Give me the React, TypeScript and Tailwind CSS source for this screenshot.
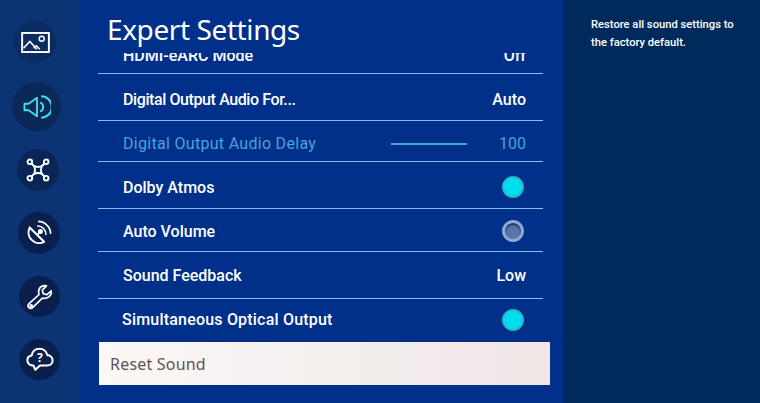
const font = { fontFamily: 'Roboto, "Noto Sans", sans-serif' };
const notoFont = { fontFamily: '"Noto Sans", sans-serif' };

function PictureIcon() {
  return (
    <svg viewBox="0 0 30 22" className="w-[29px] h-[21px]" fill="none" stroke="white" strokeWidth="1.500">
      <rect x="1" y="1" width="28" height="20" strokeWidth="2" />
      <circle cx="21.500" cy="7" r="2.600" />
      <path d="M2.500 17l6.500-7 7.500 8" strokeWidth="1.700" />
      <path d="M13 17l3-2.500 3.500 3.500" />
    </svg>
  );
}

function SoundIcon() {
  return (
    <svg viewBox="0 0 30 28" className="w-[28px] h-[26px]" fill="none" stroke="#45dcec" strokeWidth="2">
      <path d="M1.500 10.500h4.500L15 4v20l-9-6.500H1.500z" strokeLinejoin="round" />
      <path d="M18.500 9a5.500 5.500 0 0 1 0 10" />
      <path d="M19.500 2.500a11.500 11.500 0 0 1 0 23" strokeWidth="2.200" />
    </svg>
  );
}

function NetworkIcon() {
  return (
    <svg viewBox="0 0 28 28" className="w-[24px] h-[24px]" fill="none" stroke="white" strokeWidth="2.200">
      <path d="M6.500 6.500c2 3 5 4 7.500 4s5.500-1 7.500-4c-3 2-4 5-4 7.500s1 5.500 4 7.500c-2-3-5-4-7.500-4s-5.500 1-7.500 4c3-2 4-5 4-7.500s-1-5.500-4-7.500z" strokeLinejoin="round" />
      <circle cx="4.500" cy="4.500" r="2.700" />
      <circle cx="23.500" cy="4.500" r="2.700" />
      <circle cx="4.500" cy="23.500" r="2.700" />
      <circle cx="23.500" cy="23.500" r="2.700" />
    </svg>
  );
}

function SatelliteIcon() {
  return (
    <svg viewBox="0 0 28 28" className="w-[26px] h-[26px]" fill="none" stroke="white" strokeWidth="1.800">
      <path d="M4 8a11.500 11.500 0 0 0 15.500 15.500z" strokeLinejoin="round" strokeWidth="2.200" />
      <path d="M12 16l3-3" />
      <circle cx="15.500" cy="12.500" r="1.800" fill="white" />
      <path d="M12 6.500a9 9 0 0 1 9.500 9.500" />
      <path d="M13 1.500a13.500 13.500 0 0 1 13.500 13.500" />
    </svg>
  );
}

function WrenchIcon() {
  return (
    <svg viewBox="0 0 28 28" className="w-[26px] h-[26px]" fill="none" stroke="white" strokeWidth="1.800" strokeLinejoin="round">
      <path d="M26 7.500l-4.500 4-4-1-1-4 4.500-4.500c-4-1-8.500 1.500-8.500 6.500 0 1 .2 2 .5 2.800L2 21.500c-1.500 1.500-.8 3.200 0 4 .9.900 2.600 1.500 4 0l10.500-10.300c5 1.300 10.500-2.200 9.500-7.700z" />
      <circle cx="4.500" cy="23.500" r="1.100" />
    </svg>
  );
}

function CloudHelpIcon() {
  return (
    <svg viewBox="0 0 30 26" className="w-[28px] h-[25px]" fill="none" stroke="white" strokeWidth="2.200" strokeLinejoin="round">
      <path d="M8 19.500c-3.500.2-6.500-2-6.500-5.500 0-2.800 2-4.800 4.500-5.200C7 4 10.500 1.500 14.500 1.500c4.200 0 7.500 2.800 8.300 6.800 3.500.2 5.700 3 5.700 5.700 0 3.200-2.500 5.500-5.700 5.500H15l-5 4.500z" />
      <text x="15" y="15.500" textAnchor="middle" fill="white" stroke="none" fontSize="13" fontWeight="700" style={notoFont}>?</text>
    </svg>
  );
}

const navItems = [
  { icon: <PictureIcon />, box: 'ml-[14px] mt-[21px] w-[42px] h-[42px] bg-[#0b2c60]' },
  { icon: <SoundIcon />, box: 'ml-[12px] mt-[19px] w-[49px] h-[49px] bg-[#0a2858]' },
  { icon: <NetworkIcon />, box: 'ml-[17px] mt-[18px] w-[42px] h-[42px] bg-[#0a2656]' },
  { icon: <SatelliteIcon />, box: 'ml-[18px] mt-[21px] w-[42px] h-[42px] bg-[#0a1f4e]' },
  { icon: <WrenchIcon />, box: 'ml-[19px] mt-[22px] w-[41px] h-[41px] bg-[#0a1f4c]' },
  { icon: <CloudHelpIcon />, box: 'ml-[19px] mt-[22px] w-[41px] h-[41px] bg-[#0a1f4c]' },
];

function Toggle({ on }: { on: boolean }) {
  if (on) {
    return (
      <div className="mr-[2px] w-[22px] h-[22px] rounded-full bg-[#00dff2] border-2 border-[#2db4c8]" />
    );
  }
  return (
    <div className="mr-[2px] w-[22px] h-[22px] rounded-full bg-[#5a74ad] border-[3px] border-[#90a8d2] shadow-[inset_0_2px_2px_#1d2f5f]" />
  );
}

function Row({ label, height, right, pad = 'pl-[25px]', line = true, labelClass = 'text-white' }: {
  label: string;
  height: string;
  right: React.ReactNode;
  pad?: string;
  line?: boolean;
  labelClass?: string;
}) {
  return (
    <div className={`flex items-center justify-between pr-[17px] ${pad} ${height} ${line ? 'border-b border-[#78c0fa]' : ''}`}>
      <span className={labelClass}>{label}</span>
      {right}
    </div>
  );
}

export default function App() {
  return (
    <div className="flex w-[760px] h-[403px] overflow-hidden" style={font}>
      {/* Menu gauche */}
      <nav className="w-[80px] shrink-0 bg-[#0c3374] flex flex-col">
        {navItems.map((item, i) => (
          <div key={i} className={`flex items-center justify-center rounded-full shrink-0 ${item.box}`}>
            {item.icon}
          </div>
        ))}
      </nav>

      {/* Liste */}
      <main className="w-[483px] shrink-0 bg-[#00308a] flex flex-col">
        <h1 className="h-[53px] shrink-0 pl-[27px] pt-[9px] text-[28px] leading-[40px] tracking-[-0.4px] text-white whitespace-nowrap" style={notoFont}>
          Expert Settings
        </h1>
        <div className="h-[289px] overflow-hidden ml-[18px] w-[445px] text-[16px] font-medium shrink-0">
          <div className="-mt-[27px]">
            <Row label="HDMI-eARC Mode" height="h-[48px] pt-[12px]" right={<span className="text-white">Off</span>} />
            <Row label="Digital Output Audio For..." height="h-[47px] pt-[5px]" labelClass="text-white tracking-[-0.4px]" right={<span className="text-white">Auto</span>} />
            <Row
              label="Digital Output Audio Delay"
              height="h-[41px] pt-[5px]"
              labelClass="text-[#4aa3d8] font-normal tracking-[0.3px]"
              right={
                <div className="flex items-center gap-[32px]">
                  <div className="w-[76px] h-[2px] bg-[#3fa8d8]" />
                  <span className="text-[#4aa3d8] font-normal">100</span>
                </div>
              }
            />
            <Row label="Dolby Atmos" height="h-[47px] pt-[4px]" labelClass="text-white mt-[2px]" right={<Toggle on />} />
            <Row label="Auto Volume" height="h-[43px] pt-[2px]" labelClass="text-white mt-[2px]" right={<Toggle on={false} />} />
            <Row label="Sound Feedback" height="h-[47px] pt-[2px]" right={<span className="text-white">Low</span>} />
            <Row label="Simultaneous Optical Output" height="h-[44px] pb-[2px]" pad="pl-[24px]" line={false} labelClass="text-white tracking-[0.2px]" right={<Toggle on />} />
          </div>
        </div>
        <button
          className="ml-[19px] w-[451px] h-[43px] shrink-0 pl-[11px] text-left text-[16px] tracking-[0.2px] text-[#5f5157] bg-gradient-to-r from-[#fbf8f6] to-[#efe6e6]"
          style={notoFont}
        >
          Reset Sound
        </button>
      </main>

      {/* Description */}
      <aside className="flex-1 bg-[#012a5c] pl-[28px] pt-[16px] text-[11.200px] leading-[18px] font-medium text-white">
        Restore all sound settings to
        <br />
        the factory default.
      </aside>
    </div>
  );
}
